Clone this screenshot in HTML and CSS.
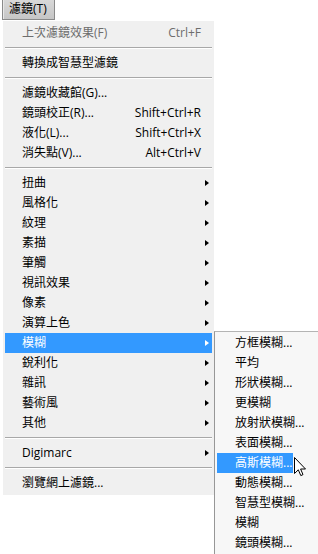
FILE: index.html
```html
<!DOCTYPE html>
<html lang="zh-Hant">
<head>
    <meta charset="UTF-8">
    <meta name="viewport" content="width=device-width, initial-scale=1.0">
    <title>濾鏡</title>
    <link rel="stylesheet" href="styles.css">
</head>
<body>
    <div class="menubar">
        <span class="tab">濾鏡(T)</span>
    </div>

    <ul class="menu main">
        <li class="item disabled"><span>上次濾鏡效果(F)</span><span class="key">Ctrl+F</span></li>
        <li class="sep"></li>
        <li class="item"><span>轉換成智慧型濾鏡</span></li>
        <li class="sep"></li>
        <li class="item"><span>濾鏡收藏館(G)...</span></li>
        <li class="item"><span>鏡頭校正(R)...</span><span class="key">Shift+Ctrl+R</span></li>
        <li class="item"><span>液化(L)...</span><span class="key">Shift+Ctrl+X</span></li>
        <li class="item"><span>消失點(V)...</span><span class="key">Alt+Ctrl+V</span></li>
        <li class="sep"></li>
        <li class="item has-sub"><span>扭曲</span><i class="arrow"></i></li>
        <li class="item has-sub"><span>風格化</span><i class="arrow"></i></li>
        <li class="item has-sub"><span>紋理</span><i class="arrow"></i></li>
        <li class="item has-sub"><span>素描</span><i class="arrow"></i></li>
        <li class="item has-sub"><span>筆觸</span><i class="arrow"></i></li>
        <li class="item has-sub"><span>視訊效果</span><i class="arrow"></i></li>
        <li class="item has-sub"><span>像素</span><i class="arrow"></i></li>
        <li class="item has-sub"><span>演算上色</span><i class="arrow"></i></li>
        <li class="item has-sub active"><span>模糊</span><i class="arrow"></i>
            <ul class="menu sub">
                <li class="item"><span>方框模糊...</span></li>
                <li class="item"><span>平均</span></li>
                <li class="item"><span>形狀模糊...</span></li>
                <li class="item"><span>更模糊</span></li>
                <li class="item"><span>放射狀模糊...</span></li>
                <li class="item"><span>表面模糊...</span></li>
                <li class="item active"><span>高斯模糊...</span>
                    <span class="cursor">
                        <svg width="13" height="20" viewBox="0 0 13 20">
                            <path d="M0.5 0.5 L0.5 16.5 L4.3 12.8 L6.8 18.6 L9 17.6 L6.6 12 L11.5 12 Z" fill="#fff" stroke="#000" stroke-width="1" stroke-linejoin="miter"/>
                        </svg>
                    </span>
                </li>
                <li class="item"><span>動態模糊...</span></li>
                <li class="item"><span>智慧型模糊...</span></li>
                <li class="item"><span>模糊</span></li>
                <li class="item"><span>鏡頭模糊...</span></li>
            </ul>
        </li>
        <li class="item has-sub"><span>銳利化</span><i class="arrow"></i></li>
        <li class="item has-sub"><span>雜訊</span><i class="arrow"></i></li>
        <li class="item has-sub"><span>藝術風</span><i class="arrow"></i></li>
        <li class="item has-sub"><span>其他</span><i class="arrow"></i></li>
        <li class="sep"></li>
        <li class="item has-sub"><span>Digimarc</span><i class="arrow"></i></li>
        <li class="sep"></li>
        <li class="item"><span>瀏覽網上濾鏡...</span></li>
    </ul>
</body>
</html>
```

FILE: styles.css
```css
body {
    margin: 0;
    min-height: 554px;
    background-color: #ffffff;
    font-family: "Open Sans", "Noto Sans CJK TC", sans-serif;
    font-size: 12px;
    color: #000000;
}

.menubar {
    height: 21px;
    padding-left: 2px;
}

.tab {
    display: inline-block;
    box-sizing: border-box;
    width: 53px;
    height: 20px;
    padding-left: 6px;
    line-height: 18px;
    background: linear-gradient(#d8d8d8, #c6c6c6);
    border: 1px solid #8a8a8a;
    border-top: none;
    box-shadow: inset 1px 0 0 #e8e8e8;
}

.menu {
    list-style: none;
    margin: 0;
    padding: 0;
}

.main {
    width: 211px;
    margin-left: 3px;
    padding: 2px;
    box-sizing: border-box;
    background-color: #f0f0f0;
}

.item {
    position: relative;
    display: flex;
    justify-content: space-between;
    align-items: center;
    height: 20px;
    line-height: 20px;
    padding-left: 17px;
    padding-right: 11px;
    white-space: nowrap;
}

.item.active {
    background-color: #3399ff;
    color: #ffffff;
}

.disabled {
    color: #6d6d6d;
}

.sep {
    height: 10px;
    box-sizing: border-box;
    padding-top: 4px;
}

.sep::after {
    content: "";
    display: block;
    height: 1px;
    background-color: #a8a8a8;
    border-bottom: 1px solid #ffffff;
}

.arrow {
    width: 0;
    height: 0;
    margin-right: -8px;
    border-left: 4px solid #000000;
    border-top: 3.5px solid transparent;
    border-bottom: 3.5px solid transparent;
}

.active > .arrow {
    border-left-color: #ffffff;
}

/* flyout of 模糊 */
.sub {
    position: absolute;
    left: calc(100% + 2px);
    top: -2px;
    width: 104px;
    box-sizing: border-box;
    padding: 1px 0 1px 2px;
    background-color: #f7f7f7;
    border-left: 1px solid #979797;
    border-top: 1px solid #b4b4b4;
    color: #000000;
}

.sub .item {
    padding-left: 18px;
    padding-right: 0;
}

.cursor {
    position: absolute;
    left: 76px;
    top: 0;
    width: 25px;
    height: 20px;
    background-color: #f7f7f7;
}

.cursor svg {
    position: absolute;
    left: 1px;
    top: 4px;
}
```
